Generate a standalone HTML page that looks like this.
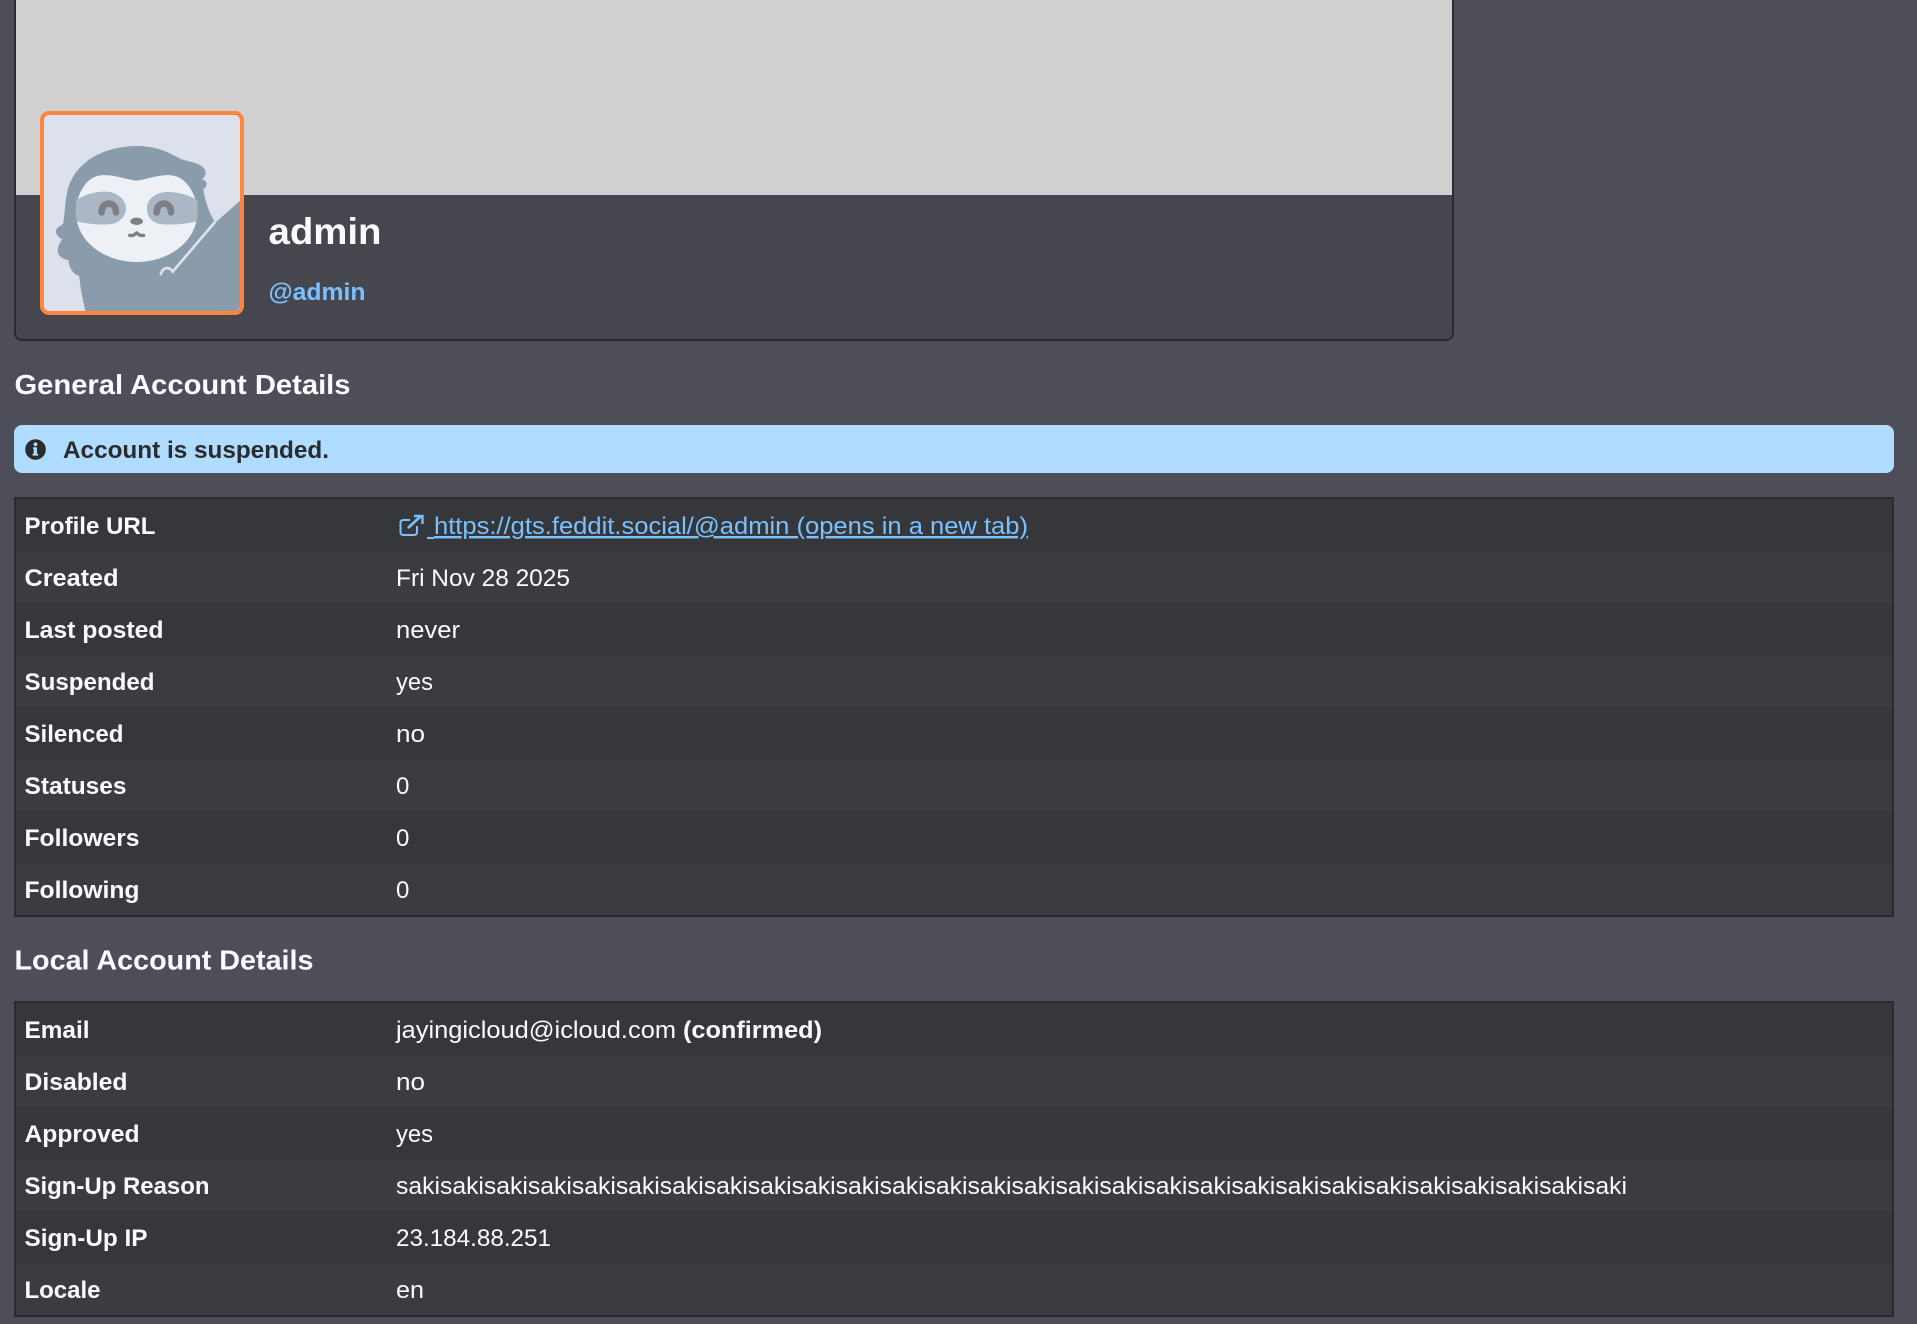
<!DOCTYPE html>
<html lang="en">
<head>
<meta charset="utf-8">
<title>admin - Account Details</title>
<style>
html,body{margin:0;padding:0;width:1917px;height:1324px;overflow:hidden;background:#4e4e58;}
.box{position:absolute;box-sizing:border-box;}
.card{left:14px;top:-12px;width:1440px;height:353px;background:#46464f;border:2px solid #2a2b2f;border-radius:8px;}
.banner{left:16px;top:0;width:1436px;height:195px;background:#d0d0d0;}
.alert{left:14px;top:425px;width:1880px;height:48px;background:#b0dcff;border-radius:8px;}
.tbl{left:14px;width:1880px;border:2px solid #2a2b2f;background:#36373b;}
.row{height:52px;}
.row:nth-child(even){background:#3b3c41;}
svg.layer{position:absolute;left:0;top:0;}
text{font-family:"Liberation Sans",sans-serif;font-size:24px;fill:#fafaff;}
.b{font-weight:700;}
</style>
</head>
<body>
<div class="box card"></div>
<div class="box banner"></div>
<div class="box alert"></div>
<div class="box tbl" style="top:497px;height:420px"><div class="row"></div><div class="row"></div><div class="row"></div><div class="row"></div><div class="row"></div><div class="row"></div><div class="row"></div><div class="row"></div></div>
<div class="box tbl" style="top:1001px;height:316px"><div class="row"></div><div class="row"></div><div class="row"></div><div class="row"></div><div class="row"></div><div class="row"></div></div>

<svg class="layer" width="1917" height="1324" viewBox="0 0 1917 1324" xmlns="http://www.w3.org/2000/svg">
  <defs><clipPath id="av"><rect x="44" y="115" width="196" height="196" rx="5"/></clipPath></defs>
  <!-- avatar -->
  <rect x="42" y="113" width="200" height="200" rx="7" fill="#dce1ec" stroke="#ff853e" stroke-width="4"/>
  <g clip-path="url(#av)">
    <g transform="translate(30 100) scale(0.33333)">
      <path fill="#8a9bab" d="M168 640C158 600 150 560 148 528C135 525 118 510 115 480C95 478 80 465 84 445C85 435 92 425 96 418C85 412 76 400 78 392C80 382 92 378 100 370C104 340 106 300 112 275C125 210 190 140 320 138C385 138 420 160 455 178C480 185 510 190 522 205C532 218 525 232 515 238C530 240 537 255 520 268C525 300 535 335 556 368L632 301L640 640Z"/>
      <path fill="#edf1f5" d="M320 242C285 238 250 222 212 226C165 230 138 290 138 335C138 430 230 486 320 486C410 486 502 430 502 335C502 290 472 230 425 226C385 222 355 238 320 242Z"/>
      <path fill="#acb7c5" d="M139 300C170 278 215 272 240 276C270 282 288 305 288 325C288 350 265 373 235 373C200 375 170 371 140 364C136 340 136 320 139 300Z"/>
      <path fill="#acb7c5" d="M501 300C470 280 420 272 395 278C365 285 351 305 351 325C351 350 365 371 400 373C440 375 470 371 500 364C504 340 504 320 501 300Z"/>
      <path fill="none" stroke="#7d7f85" stroke-width="20" stroke-linecap="round" d="M215 337C215 302 258 302 258 337M380 337C380 302 423 302 423 337"/>
      <ellipse cx="320" cy="364" rx="19" ry="11" fill="#7d7f85"/>
      <path fill="none" stroke="#7d7f85" stroke-width="10" stroke-linecap="round" d="M299 406C308 408 312 405 320 399C328 405 332 408 341 406"/>
      <path fill="none" stroke="#dfe4ec" stroke-width="8" d="M555 366L428 515C415 495 395 505 392 526"/>
    </g>
  </g>

  <!-- profile heading -->
  <text class="b" x="268.5" y="244" style="font-size:37px" textLength="113" lengthAdjust="spacingAndGlyphs">admin</text>
  <text class="b" x="268.5" y="300" style="fill:#7bc0ff" textLength="97" lengthAdjust="spacingAndGlyphs">@admin</text>

  <!-- section headings -->
  <text class="b" x="14.5" y="394" style="font-size:28px" textLength="336" lengthAdjust="spacingAndGlyphs">General Account Details</text>
  <text class="b" x="14.5" y="969.5" style="font-size:28px" textLength="299" lengthAdjust="spacingAndGlyphs">Local Account Details</text>

  <!-- alert -->
  <circle cx="35.5" cy="449.5" r="10.3" fill="#2a2b2f"/>
  <circle cx="35.5" cy="444.3" r="1.9" fill="#b0dcff"/>
  <path fill="#b0dcff" d="M33 447.2h4v6.6h1.2v1.8h-5.6v-1.8h1.1v-4.8h-.7z"/>
  <text class="b" x="63" y="458" style="fill:#2a2b2f" textLength="266" lengthAdjust="spacingAndGlyphs">Account is suspended.</text>

  <!-- table 1 labels -->
  <text class="b" x="24.5" y="534" textLength="131" lengthAdjust="spacingAndGlyphs">Profile URL</text>
  <text class="b" x="24.5" y="586" textLength="94" lengthAdjust="spacingAndGlyphs">Created</text>
  <text class="b" x="24.5" y="638" textLength="139" lengthAdjust="spacingAndGlyphs">Last posted</text>
  <text class="b" x="24.5" y="690" textLength="130" lengthAdjust="spacingAndGlyphs">Suspended</text>
  <text class="b" x="24.5" y="742" textLength="99" lengthAdjust="spacingAndGlyphs">Silenced</text>
  <text class="b" x="24.5" y="794" textLength="102" lengthAdjust="spacingAndGlyphs">Statuses</text>
  <text class="b" x="24.5" y="846" textLength="115" lengthAdjust="spacingAndGlyphs">Followers</text>
  <text class="b" x="24.5" y="898" textLength="115" lengthAdjust="spacingAndGlyphs">Following</text>

  <!-- table 1 values -->
  <g fill="none" stroke="#7bc0ff" stroke-width="2">
    <path d="M410 520H403.5Q400.5 520 400.5 523V532Q400.5 535 403.5 535H414Q417 535 417 532V526"/>
    <path stroke-width="2.6" d="M408 528L421 516"/>
    <path stroke-width="2.4" d="M414 516H422.5V524"/>
  </g>
  <rect x="427" y="537" width="7" height="2" fill="#7bc0ff"/>
  <text x="434" y="534" style="fill:#7bc0ff;text-decoration:underline" textLength="594" lengthAdjust="spacingAndGlyphs">https://gts.feddit.social/@admin (opens in a new tab)</text>
  <text x="396" y="586" textLength="174" lengthAdjust="spacingAndGlyphs">Fri Nov 28 2025</text>
  <text x="396" y="638" textLength="64" lengthAdjust="spacingAndGlyphs">never</text>
  <text x="396" y="690" textLength="37" lengthAdjust="spacingAndGlyphs">yes</text>
  <text x="396" y="742" textLength="29" lengthAdjust="spacingAndGlyphs">no</text>
  <text x="396" y="794" textLength="14">0</text>
  <text x="396" y="846" textLength="14">0</text>
  <text x="396" y="898" textLength="14">0</text>

  <!-- table 2 labels -->
  <text class="b" x="24.5" y="1038" textLength="65" lengthAdjust="spacingAndGlyphs">Email</text>
  <text class="b" x="24.5" y="1090" textLength="103" lengthAdjust="spacingAndGlyphs">Disabled</text>
  <text class="b" x="24.5" y="1142" textLength="115" lengthAdjust="spacingAndGlyphs">Approved</text>
  <text class="b" x="24.5" y="1194" textLength="185" lengthAdjust="spacingAndGlyphs">Sign-Up Reason</text>
  <text class="b" x="24.5" y="1246" textLength="123" lengthAdjust="spacingAndGlyphs">Sign-Up IP</text>
  <text class="b" x="24.5" y="1298" textLength="76" lengthAdjust="spacingAndGlyphs">Locale</text>

  <!-- table 2 values -->
  <text x="396" y="1038" textLength="280" lengthAdjust="spacingAndGlyphs">jayingicloud@icloud.com</text>
  <text class="b" x="683" y="1038" textLength="139" lengthAdjust="spacingAndGlyphs">(confirmed)</text>
  <text x="396" y="1090" textLength="29" lengthAdjust="spacingAndGlyphs">no</text>
  <text x="396" y="1142" textLength="37" lengthAdjust="spacingAndGlyphs">yes</text>
  <text x="396" y="1194" textLength="1231" lengthAdjust="spacingAndGlyphs">sakisakisakisakisakisakisakisakisakisakisakisakisakisakisakisakisakisakisakisakisakisakisakisakisakisakisakisaki</text>
  <text x="396" y="1246" textLength="155" lengthAdjust="spacingAndGlyphs">23.184.88.251</text>
  <text x="396" y="1298" textLength="28" lengthAdjust="spacingAndGlyphs">en</text>
</svg>
</body>
</html>
